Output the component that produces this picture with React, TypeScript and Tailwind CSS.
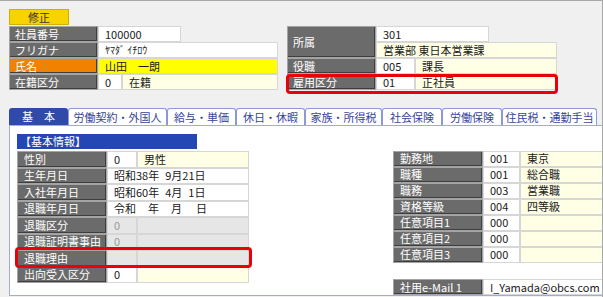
import React from "react";

const Lbl = ({ children, className = "" }: { children?: React.ReactNode; className?: string }) => (
  <div
    className={`flex items-center shrink-0 text-white border border-[#a4a4a4] shadow-[inset_-1px_-1px_0_#3e3e3e] whitespace-nowrap ${className}`}
  >
    {children}
  </div>
);

const Val = ({ children, className = "" }: { children?: React.ReactNode; className?: string }) => (
  <div className={`flex items-center shrink-0 border border-[#d6d6d6] pl-[6px] whitespace-pre ${className}`}>{children}</div>
);

const tabs = [
  { t: "労働契約・外国人", w: "w-[99px]" },
  { t: "給与・単価", w: "w-[69px]" },
  { t: "休日・休暇", w: "w-[69px]" },
  { t: "家族・所得税", w: "w-[77px]" },
  { t: "社会保険", w: "w-[60px]" },
  { t: "労働保険", w: "w-[60px]" },
  { t: "住民税・通勤手当", w: "w-[95px]" },
];

export default function App() {
  return (
    <div className="w-[603px] h-[297px] overflow-hidden bg-[#f0f0f0] relative border-t border-r border-[#a8a8a8] text-[11px] text-[#1a1a1a] [font-family:'Noto_Sans_CJK_JP',sans-serif] leading-none">
      {/* top section */}
      <div className="pl-[9px] pt-[8px]">
        <div className="w-[60px] h-[16px] flex items-center justify-center bg-[#f7d400] border border-[#d2b000] text-[#333]">
          修正
        </div>
        <div className="flex mt-[1px]">
          {/* left */}
          <div className="w-[269px] flex flex-col">
            <div className="flex h-[16px]">
              <Lbl className="w-[89px] pl-[5px] bg-[#6b6b6b]">社員番号</Lbl>
              <Val className="w-[83px] bg-white">100000</Val>
            </div>
            <div className="flex h-[16px]">
              <Lbl className="w-[89px] pl-[5px] bg-[#6b6b6b]">フリガナ</Lbl>
              <Val className="w-[180px] bg-white text-[10px]">ﾔﾏﾀﾞ ｲﾁﾛｳ</Val>
            </div>
            <div className="flex h-[16px]">
              <Lbl className="w-[89px] pl-[5px] bg-[#f08200]">氏名</Lbl>
              <Val className="w-[180px] bg-[#ffff00]">山田　一朗</Val>
            </div>
            <div className="flex h-[16px]">
              <Lbl className="w-[89px] pl-[5px] bg-[#6b6b6b]">在籍区分</Lbl>
              <Val className="w-[24px] bg-white">0</Val>
              <Val className="w-[156px] bg-[#ffffe6]">在籍</Val>
            </div>
          </div>
          {/* right */}
          <div className="ml-[9px] w-[270px] flex flex-col">
            <div className="flex h-[32px]">
              <Lbl className="w-[89px] pl-[5px] bg-[#6b6b6b]">所属</Lbl>
              <div className="flex flex-col">
                <Val className="w-[113px] h-[16px] bg-white">301</Val>
                <Val className="w-[181px] h-[16px] bg-[#ffffe6]">営業部 東日本営業課</Val>
              </div>
            </div>
            <div className="flex h-[16px]">
              <Lbl className="w-[89px] pl-[5px] bg-[#6b6b6b]">役職</Lbl>
              <Val className="w-[39px] bg-white">005</Val>
              <Val className="w-[142px] bg-[#ffffe6]">課長</Val>
            </div>
            <div className="flex h-[16px]">
              <Lbl className="w-[89px] pl-[5px] bg-[#6b6b6b]">雇用区分</Lbl>
              <Val className="w-[39px] bg-white">01</Val>
              <Val className="w-[142px] bg-[#ffffe6]">正社員</Val>
            </div>
          </div>
        </div>
      </div>

      {/* tabs */}
      <div className="flex mt-[18px] pl-[9px] h-[17px]">
        <div className="w-[59px] h-[17px] flex items-center justify-center bg-[#2f4aa8] text-white rounded-t-[3px] whitespace-pre">
          基　本
        </div>
        {tabs.map((tb) => (
          <div
            key={tb.t}
            className={`${tb.w} h-[17px] flex items-center justify-center bg-white text-[#34449a] border border-b-0 border-[#8d99d6] rounded-t-[3px] whitespace-nowrap`}
          >
            {tb.t}
          </div>
        ))}
      </div>

      {/* panel */}
      <div className="ml-[9px] h-[171px] bg-white border-l border-t border-b border-[#a3abd4] flex pl-[7px] pt-[8px]">
        {/* left column */}
        <div className="w-[232px] flex flex-col">
          <div className="w-[180px] h-[15px] bg-[#2447b3] text-white flex items-center pl-[3px]">【基本情報】</div>
          <div className="mt-[2px] flex flex-col">
            <div className="flex h-[16.5px]">
              <Lbl className="w-[90px] pl-[6px] bg-[#6b6b6b]">性別</Lbl>
              <Val className="w-[30px] bg-white">0</Val>
              <Val className="w-[112px] bg-[#ffffe6]">男性</Val>
            </div>
            <div className="flex h-[16.5px]">
              <Lbl className="w-[90px] pl-[6px] bg-[#6b6b6b]">生年月日</Lbl>
              <Val className="w-[142px] bg-white">
                <span>昭和38年</span>
                <span className="ml-[6px]">9月21日</span>
              </Val>
            </div>
            <div className="flex h-[16.5px]">
              <Lbl className="w-[90px] pl-[6px] bg-[#6b6b6b]">入社年月日</Lbl>
              <Val className="w-[142px] bg-white">
                <span>昭和60年</span>
                <span className="ml-[6px]">4月</span>
                <span className="ml-[6px]">1日</span>
              </Val>
            </div>
            <div className="flex h-[16.5px]">
              <Lbl className="w-[90px] pl-[6px] bg-[#6b6b6b]">退職年月日</Lbl>
              <Val className="w-[142px] bg-white">
                <span>令和</span>
                <span className="ml-[12px]">年</span>
                <span className="ml-[12px]">月</span>
                <span className="ml-[14px]">日</span>
              </Val>
            </div>
            <div className="flex h-[16.5px]">
              <Lbl className="w-[90px] pl-[6px] bg-[#6b6b6b]">退職区分</Lbl>
              <Val className="w-[30px] bg-[#e6e6e6] text-[#9a9a9a]">0</Val>
              <Val className="w-[112px] bg-[#e6e6e6]"></Val>
            </div>
            <div className="flex h-[16.5px]">
              <Lbl className="w-[90px] pl-[6px] bg-[#6b6b6b]">退職証明書事由</Lbl>
              <Val className="w-[30px] bg-[#e6e6e6] text-[#9a9a9a]">0</Val>
              <Val className="w-[112px] bg-[#e6e6e6]"></Val>
            </div>
            <div className="flex h-[16.5px]">
              <Lbl className="w-[90px] pl-[6px] bg-[#6b6b6b]">退職理由</Lbl>
              <Val className="w-[30px] bg-[#e6e6e6]"></Val>
              <Val className="w-[112px] bg-[#e6e6e6]"></Val>
            </div>
            <div className="flex h-[16.5px]">
              <Lbl className="w-[90px] pl-[6px] bg-[#6b6b6b]">出向受入区分</Lbl>
              <Val className="w-[30px] bg-white">0</Val>
              <Val className="w-[112px] bg-[#ffffe6]"></Val>
            </div>
          </div>
        </div>

        {/* right column */}
        <div className="ml-[144px] pt-[17px] flex flex-col">
          {[
            ["勤務地", "001", "東京"],
            ["職種", "001", "総合職"],
            ["職務", "003", "営業職"],
            ["資格等級", "004", "四等級"],
            ["任意項目1", "000", ""],
            ["任意項目2", "000", ""],
            ["任意項目3", "000", ""],
          ].map(([l, c, n]) => (
            <div key={l} className="flex h-[16.5px]">
              <Lbl className="w-[90px] pl-[6px] bg-[#6b6b6b]">{l}</Lbl>
              <Val className="w-[37px] bg-white">{c}</Val>
              <Val className="w-[90px] bg-[#ffffe6]">{n}</Val>
            </div>
          ))}
          <div className="flex h-[16.5px] mt-[16.5px]">
            <Lbl className="w-[90px] pl-[6px] bg-[#6b6b6b]">社用e-Mail 1</Lbl>
            <Val className="w-[127px] bg-white">I_Yamada@obcs.com</Val>
          </div>
        </div>
      </div>

      {/* highlight overlays */}
      <div className="absolute left-[286px] top-[73px] w-[272px] h-[20px] border-[3px] border-[#e8000b] rounded-[4px]" />
      <div className="absolute left-[15px] top-[246px] w-[237px] h-[21px] border-[3px] border-[#e8000b] rounded-[4px]" />
    </div>
  );
}
